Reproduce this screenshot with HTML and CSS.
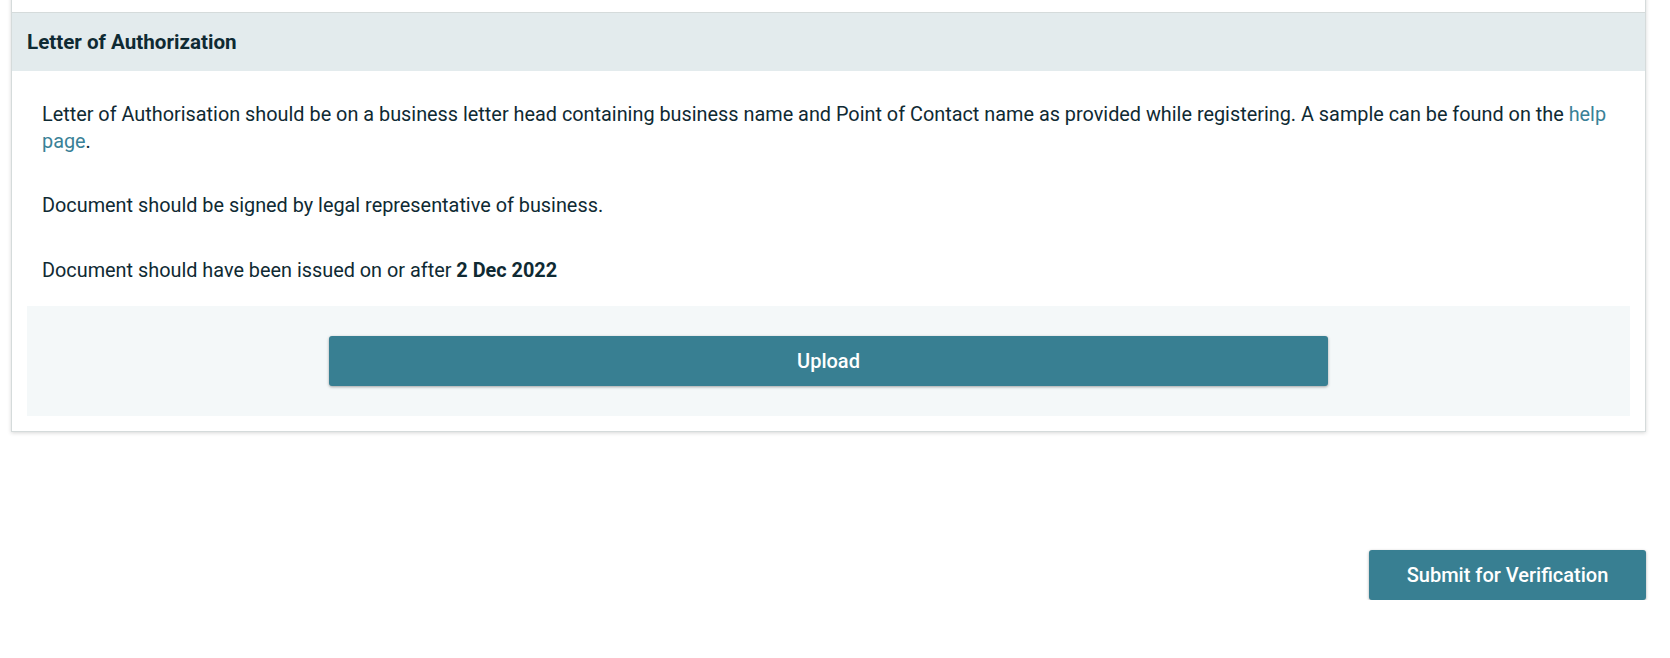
FILE: index.html
```html
<!DOCTYPE html>
<html lang="en">
<head>
<meta charset="utf-8">
<title>Letter of Authorization</title>
<link rel="stylesheet" href="styles.css">
</head>
<body>
<div class="page">
  <section class="card">
    <div class="card-prev"></div>
    <div class="card-header">Letter of Authorization</div>
    <div class="card-body">
      <p class="para">Letter of Authorisation should be on a business letter head containing business name and Point of Contact name as provided while registering. A sample can be found on the <a class="link" href="#">help page</a>.</p>
      <p class="para">Document should be signed by legal representative of business.</p>
      <p class="para">Document should have been issued on or after <strong>2 Dec 2022</strong></p>
      <div class="upload-area">
        <button class="btn btn-upload" type="button">Upload</button>
      </div>
    </div>
  </section>
  <div class="actions">
    <button class="btn btn-submit" type="button">Submit for Verification</button>
  </div>
</div>
</body>
</html>
```
FILE: styles.css
```css
html, body {
  margin: 0;
  padding: 0;
  background: #ffffff;
}
body {
  font-family: Roboto, "Noto Sans", Arial, sans-serif;
  color: #0f2a33;
  font-size: 20px;
}
.page {
  padding: 0 24px 0 11px;
}
.card {
  margin-top: -20px;
  background: #fff;
  border: 1px solid #d5dbdb;
  box-shadow: 0 1px 4px rgba(0, 0, 0, 0.16);
}
.card-prev {
  height: 31px;
}
.card-header {
  border-top: 1px solid #d5dbdb;
  background: #e3ebed;
  height: 58px;
  display: flex;
  align-items: center;
  padding: 0 15px;
  font-weight: 700;
  font-size: 20.6px;
}
.card-body {
  padding: 31px 15px 15px;
}
.para {
  margin: 0 0 38px;
  padding: 0 8px 0 15px;
  line-height: 26.6px;
  font-size: 19.85px;
}
.para:last-of-type {
  margin-bottom: 22px;
}
.para strong {
  font-weight: 700;
}
.link {
  color: #3a8197;
  text-decoration: none;
}
.upload-area {
  background: #f4f8f9;
  padding: 30px 0;
  display: flex;
  justify-content: center;
}
.btn {
  font-family: inherit;
  border: none;
  border-radius: 3px;
  background: #387f92;
  color: #fff;
  font-size: 20px;
  font-weight: 500;
  height: 50px;
  box-shadow: 0 1px 3px rgba(0, 0, 0, 0.35);
  cursor: pointer;
}
.btn-upload {
  width: 999px;
}
.actions {
  display: flex;
  justify-content: flex-end;
  margin-top: 118px;
}
.btn-submit {
  width: 277px;
}
```
